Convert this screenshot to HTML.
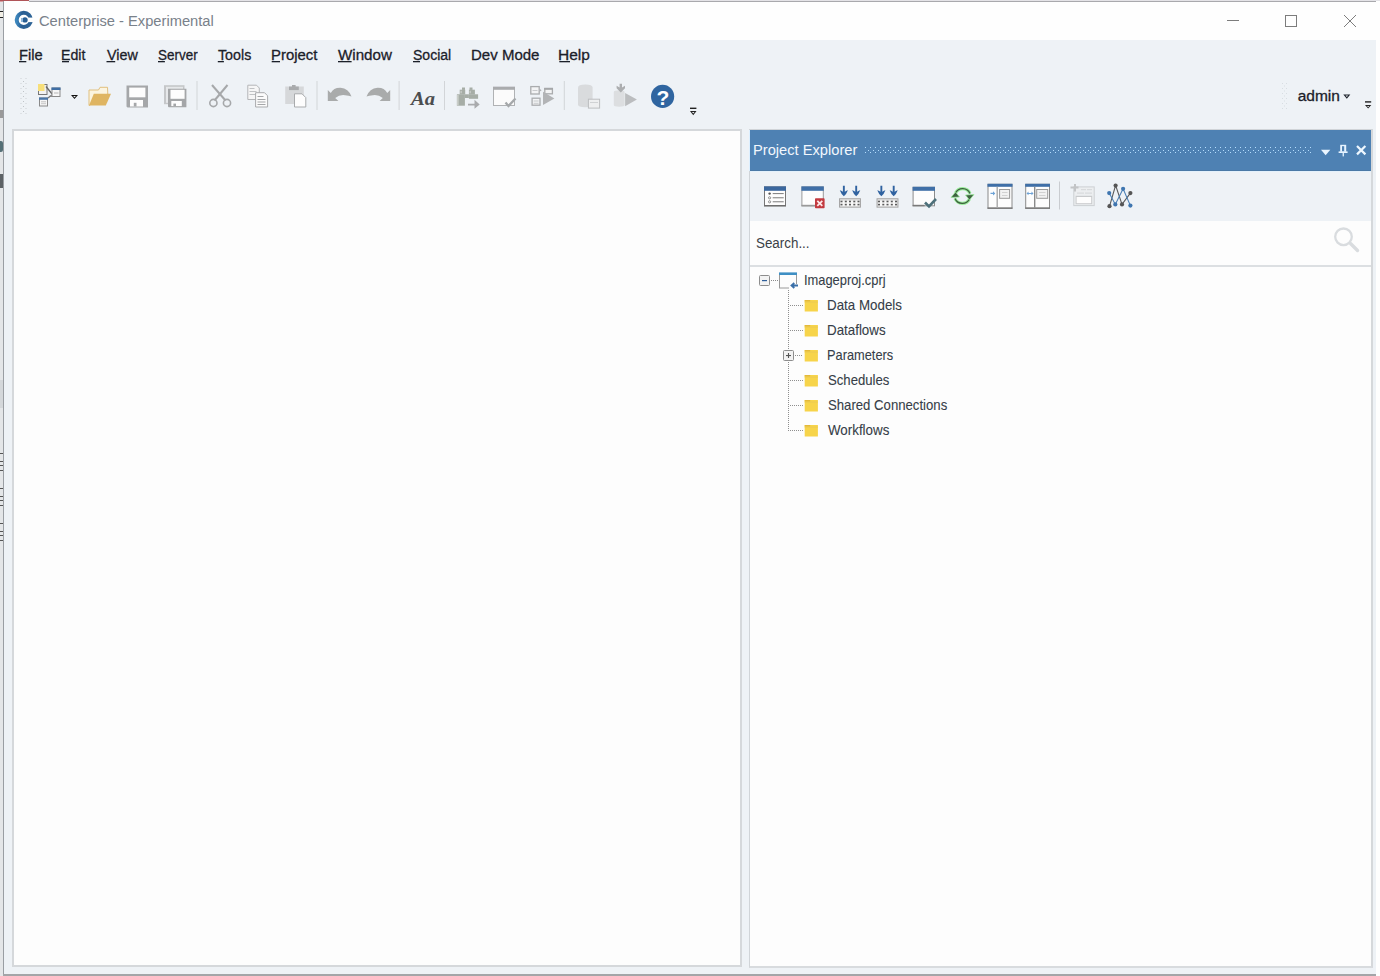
<!DOCTYPE html>
<html><head><meta charset="utf-8">
<style>
*{margin:0;padding:0;box-sizing:border-box}
html,body{width:1380px;height:976px;overflow:hidden;background:#fff;font-family:"Liberation Sans",sans-serif}
.a{position:absolute}
.t{position:absolute;white-space:nowrap;line-height:1;transform-origin:0 0}
.menu{color:#1b2029;-webkit-text-stroke:0.3px #1b2029}
.tree{color:#363d48;-webkit-text-stroke:0.1px #363d48}
svg{position:absolute;left:0;top:0}
</style></head><body>
<div class="a" style="left:0;top:0;width:3px;height:976px;background:#e4e6e8"></div>
<div class="a" style="left:0;top:0;width:29px;height:1px;background:#b05458"></div><div class="a" style="left:0;top:1px;width:29px;height:1px;background:#d9a0a2"></div>
<div class="a" style="left:0;top:11px;width:3px;height:7px;border-top:1px solid #222;border-bottom:1px solid #222;background:#f2efe6"></div>
<div class="a" style="left:0;top:110px;width:3px;height:8px;background:#9a9a9a"></div>
<div class="a" style="left:0;top:141px;width:3px;height:11px;background:#557077;border-radius:0 2px 2px 0"></div>
<div class="a" style="left:0;top:174px;width:3px;height:14px;background:#5d6266"></div>
<div class="a" style="left:0;top:380px;width:3px;height:28px;background:#d4d7da"></div>
<div class="a" style="left:0;top:453px;width:3px;height:1px;background:#555"></div>
<div class="a" style="left:0;top:461px;width:3px;height:1px;background:#555"></div>
<div class="a" style="left:0;top:465px;width:3px;height:1px;background:#555"></div>
<div class="a" style="left:0;top:470px;width:3px;height:1px;background:#555"></div>
<div class="a" style="left:0;top:488px;width:3px;height:1px;background:#555"></div>
<div class="a" style="left:0;top:496px;width:3px;height:1px;background:#555"></div>
<div class="a" style="left:0;top:500px;width:3px;height:1px;background:#555"></div>
<div class="a" style="left:0;top:505px;width:3px;height:1px;background:#555"></div>
<div class="a" style="left:0;top:523px;width:3px;height:1px;background:#555"></div>
<div class="a" style="left:0;top:531px;width:3px;height:1px;background:#555"></div>
<div class="a" style="left:0;top:535px;width:3px;height:1px;background:#555"></div>
<div class="a" style="left:0;top:540px;width:3px;height:1px;background:#555"></div>
<div class="a" style="left:29px;top:0;width:1351px;height:1px;background:#e4e3e7"></div>
<div class="a" style="left:3px;top:1px;width:1373px;height:975px;background:#eef2f6;border-left:1px solid #9a9ea3"></div>
<div class="a" style="left:4px;top:1px;width:1372px;height:39px;background:#fefefe"></div>
<div class="a" style="left:29px;top:1px;width:1347px;height:1px;background:#a9a9ad"></div>
<div class="a" style="left:3px;top:974px;width:1373px;height:2px;background:#a3a5a8"></div>
<div class="a" style="left:1376px;top:1px;width:4px;height:975px;background:#fefefe"></div>
<div class="a" style="left:12px;top:129px;width:730px;height:838px;background:#fdfdfd;border:2px solid #d5d8db"></div>
<div class="a" style="left:749px;top:129px;width:624px;height:839px;background:#fdfdfd;border:1px solid #d0d4d8;border-right:2px solid #d5d8db;border-bottom:2px solid #d8dbde"></div>
<div class="a" style="left:750px;top:130px;width:621px;height:41px;background:#4e81b3"></div>
<div class="a" style="left:750px;top:171px;width:621px;height:50px;background:#eef2f6"></div>
<div class="a" style="left:749px;top:130px;width:1px;height:41px;background:#dcefff"></div>
<div class="a" style="left:750px;top:170px;width:621px;height:1px;background:#4a79a6"></div>
<div class="a" style="left:750px;top:171px;width:621px;height:1px;background:#e4f1fb"></div>
<div class="a" style="left:750px;top:265px;width:621px;height:2px;background:#dcdfe2"></div>
<div class="t" style="left:39.40px;top:13px;font-size:15.5px;transform:scaleX(0.948);color:#79818a">Centerprise - Experimental</div>
<div class="t menu" style="left:18.65px;top:47px;font-size:15.5px;transform:scaleX(0.946)">File</div>
<div class="t menu" style="left:61.29px;top:47px;font-size:15.5px;transform:scaleX(0.913)">Edit</div>
<div class="t menu" style="left:106.50px;top:47px;font-size:15.5px;transform:scaleX(0.923)">View</div>
<div class="t menu" style="left:158.00px;top:47px;font-size:15.5px;transform:scaleX(0.868)">Server</div>
<div class="t menu" style="left:217.80px;top:47px;font-size:15.5px;transform:scaleX(0.919)">Tools</div>
<div class="t menu" style="left:270.74px;top:47px;font-size:15.5px;transform:scaleX(0.962)">Project</div>
<div class="t menu" style="left:338.00px;top:47px;font-size:15.5px;transform:scaleX(0.978)">Window</div>
<div class="t menu" style="left:413.00px;top:47px;font-size:15.5px;transform:scaleX(0.905)">Social</div>
<div class="t menu" style="left:471.13px;top:47px;font-size:15.5px;transform:scaleX(0.969)">Dev Mode</div>
<div class="t menu" style="left:558.30px;top:47px;font-size:15.5px;transform:scaleX(0.998)">Help</div>
<div class="t menu" style="left:1297.70px;top:88px;font-size:15.5px;transform:scaleX(1.0)">admin</div>
<div class="t" style="left:753.45px;top:142px;font-size:15.5px;transform:scaleX(0.946);color:#f2f7fd">Project Explorer</div>
<div class="t" style="left:755.70px;top:235px;font-size:15.5px;transform:scaleX(0.863);color:#3a3f46">Search...</div>
<div class="t tree" style="left:803.84px;top:272px;font-size:15px;transform:scaleX(0.858)">Imageproj.cprj</div>
<div class="t tree" style="left:827.21px;top:297px;font-size:15px;transform:scaleX(0.89)">Data Models</div>
<div class="t tree" style="left:827.21px;top:322px;font-size:15px;transform:scaleX(0.89)">Dataflows</div>
<div class="t tree" style="left:827.25px;top:347px;font-size:15px;transform:scaleX(0.854)">Parameters</div>
<div class="t tree" style="left:828.10px;top:372px;font-size:15px;transform:scaleX(0.876)">Schedules</div>
<div class="t tree" style="left:828.10px;top:397px;font-size:15px;transform:scaleX(0.877)">Shared Connections</div>
<div class="t tree" style="left:828.10px;top:422px;font-size:15px;transform:scaleX(0.89)">Workflows</div>

<svg width="1380" height="976" viewBox="0 0 1380 976">
<!-- logo -->
<defs><linearGradient id="lg" x1="0" y1="0" x2="1" y2="0"><stop offset="0" stop-color="#3c86bd"/><stop offset="0.35" stop-color="#2b5f93"/><stop offset="1" stop-color="#2d6396"/></linearGradient></defs>
<circle cx="23.8" cy="19.9" r="7.1" fill="none" stroke="url(#lg)" stroke-width="4"/>
<rect x="26" y="17.6" width="9" height="4.5" fill="#fefefe"/>
<circle cx="25" cy="19.9" r="2.7" fill="#2a5f93"/>
<path d="M21,18 L23,18 L23,22 L21,22 Z" fill="#8fb6d8"/>
<!-- window controls -->
<line x1="1227" y1="20.5" x2="1239" y2="20.5" stroke="#7c7c7c" stroke-width="1"/>
<rect x="1285.5" y="15.5" width="11" height="11" fill="none" stroke="#7c7c7c" stroke-width="1"/>
<path d="M1344,15 L1356,27 M1356,15 L1344,27" stroke="#6e6e6e" stroke-width="0.9"/>

<!-- underlines -->
<g fill="#1b2029"><rect x="19" y="61" width="7.3" height="1.3"/><rect x="62" y="61" width="7.0" height="1.3"/><rect x="106.5" y="61" width="8.7" height="1.3"/><rect x="158" y="61" width="6.9" height="1.3"/><rect x="217.8" y="61" width="6.1" height="1.3"/><rect x="271.7" y="61" width="8.3" height="1.3"/><rect x="338" y="61" width="13.6" height="1.3"/><rect x="413" y="61" width="7.0" height="1.3"/><rect x="559.3" y="61" width="10.7" height="1.3"/></g>
<!-- toolbar grip -->
<g fill="#cdd1d5"><rect x="20.5" y="78" width="1" height="1"/><rect x="25.5" y="78" width="1" height="1"/><rect x="20.5" y="83" width="1" height="1"/><rect x="25.5" y="83" width="1" height="1"/><rect x="20.5" y="88" width="1" height="1"/><rect x="25.5" y="88" width="1" height="1"/><rect x="20.5" y="93" width="1" height="1"/><rect x="25.5" y="93" width="1" height="1"/><rect x="20.5" y="98" width="1" height="1"/><rect x="25.5" y="98" width="1" height="1"/><rect x="20.5" y="103" width="1" height="1"/><rect x="25.5" y="103" width="1" height="1"/><rect x="20.5" y="108" width="1" height="1"/><rect x="25.5" y="108" width="1" height="1"/><rect x="20.5" y="113" width="1" height="1"/><rect x="25.5" y="113" width="1" height="1"/></g><g fill="#bfc3c7"><rect x="23" y="81" width="1" height="1"/><rect x="23" y="86" width="1" height="1"/><rect x="23" y="91" width="1" height="1"/><rect x="23" y="96" width="1" height="1"/><rect x="23" y="101" width="1" height="1"/><rect x="23" y="106" width="1" height="1"/><rect x="23" y="111" width="1" height="1"/></g>
<!-- new project icon -->
<g>
<rect x="38.5" y="84.5" width="8.5" height="10" fill="#f2f2f2" stroke="#777" stroke-width="1"/>
<rect x="38" y="84" width="6.5" height="7" fill="#f7df7a"/>
<path d="M46,86.5 L52.5,94.5" stroke="#666" stroke-width="1.3"/>
<path d="M48,98 L50.5,96 L52,96" stroke="#777" stroke-width="1.3" fill="none"/>
<rect x="52" y="88" width="8" height="8.5" fill="#f6f6f6" stroke="#8a8a8a" stroke-width="1"/>
<rect x="51.5" y="87.5" width="9" height="2.5" fill="#3f6ea4"/>
<rect x="54" y="92" width="4.5" height="2" fill="#d6d6d6"/>
<rect x="39.5" y="98" width="8" height="8" fill="#f6f6f6" stroke="#8a8a8a" stroke-width="1"/>
<rect x="39" y="97.5" width="9" height="2.3" fill="#4a76a8"/>
<rect x="41" y="101" width="5" height="1.4" fill="#d0d0d0"/>
<rect x="41" y="103" width="5" height="1.2" fill="#d0d0d0"/>
</g>
<!-- dropdown arrow -->
<path d="M71,95 L78,95 L74.5,99 Z" fill="#111"/>
<path d="M73.2,96 L75.8,96 L74.5,97.5 Z" fill="#f0f0f0"/>

<!-- folder -->
<g>
<path d="M89,105.5 L89,90 L98.5,90 L100,87.3 L107.5,87.3 L107.8,94 Z" fill="#fbf4e0" stroke="#e1c07f" stroke-width="1"/>
<path d="M89,105.5 L93.8,93.7 L111,93.7 L105.8,105.5 Z" fill="#dfb562"/>
</g>

<!-- save -->
<g>
<path d="M126.5,85.5 L148,85.5 L148,107.5 L127.5,107.5 L126.5,106.5 Z" fill="#a5a7a9"/>
<rect x="129.2" y="87.6" width="16.2" height="9.7" fill="#fdfdfd"/>
<rect x="130" y="100" width="13" height="6.5" fill="#fdfdfd"/>
<rect x="133.8" y="102.8" width="2.7" height="3.7" fill="#a5a7a9"/>
</g>
<!-- save all -->
<g>
<rect x="164" y="85.2" width="20.5" height="19" fill="#c5c7c9"/>
<rect x="166" y="86.8" width="17" height="16" fill="#e6e8ea"/>
<path d="M168,88.7 L186.4,88.7 L186.4,107.2 L168.8,107.2 L168,106.4 Z" fill="#a4a6a8"/>
<rect x="170.5" y="89.8" width="14.1" height="9" fill="#fdfdfd"/>
<rect x="171.3" y="101" width="10.5" height="5.1" fill="#fdfdfd"/>
<rect x="173.4" y="103.6" width="2.6" height="2.5" fill="#a4a6a8"/>
</g>

<!-- separators -->
<g fill="#d2d5d8">
<rect x="196.5" y="81" width="1" height="29"/>
<rect x="316.5" y="81" width="1" height="29"/>
<rect x="398.6" y="81" width="1" height="29"/>
<rect x="444" y="81" width="1" height="29"/>
<rect x="563.8" y="81" width="1" height="29"/>
</g>

<!-- scissors -->
<g fill="none" stroke="#a6a8aa">
<path d="M212,85 L225.5,100.5" stroke-width="2"/>
<path d="M227.5,85 L214.5,100.5" stroke-width="2"/>
<circle cx="213.4" cy="103" r="3.6" stroke-width="1.6"/>
<circle cx="227" cy="103" r="3.6" stroke-width="1.6"/>
</g>

<!-- copy -->
<g>
<path d="M247.8,85.2 L256.5,85.2 L259.3,88 L259.3,99.5 L247.8,99.5 Z" fill="#f6f6f6" stroke="#b4b6b8" stroke-width="1"/>
<g fill="#c0c2c4"><rect x="249.5" y="88" width="5" height="1"/><rect x="249.5" y="91" width="7" height="1"/><rect x="249.5" y="94" width="7" height="1"/></g>
<path d="M255.6,92.7 L264.5,92.7 L267.6,95.8 L267.6,107 L255.6,107 Z" fill="#fbfbfb" stroke="#a9abad" stroke-width="1"/>
<g fill="#a5a7a9"><rect x="257.5" y="96" width="6" height="1"/><rect x="257.5" y="99" width="8" height="1"/><rect x="257.5" y="101.5" width="8" height="1"/><rect x="257.5" y="104" width="8" height="1"/></g>
</g>

<!-- paste -->
<g>
<rect x="285.2" y="86.5" width="18.6" height="17.5" fill="#d6d8da"/>
<rect x="289" y="86.5" width="9.8" height="3.6" fill="#a9abad"/>
<rect x="292" y="85" width="3.6" height="2" fill="#a9abad"/>
<path d="M294.5,93.8 L302,93.8 L305.8,97.6 L305.8,107 L294.5,107 Z" fill="#fdfdfd" stroke="#a9abad" stroke-width="1"/>
</g>

<!-- undo -->
<path d="M327.8,90 L327.8,101 L338.4,101 L335.2,98 Q339.5,94.5 345,95.2 Q349,95.8 351.5,96.5 Q348.5,88.5 340.5,87.8 Q333.5,87.6 330.8,93 Z" fill="#a9abab"/>
<!-- redo -->
<path d="M390.2,90 L390.2,101 L379.6,101 L382.8,98 Q378.5,94.5 373,95.2 Q369,95.8 366.5,96.5 Q369.5,88.5 377.5,87.8 Q384.5,87.6 387.2,93 Z" fill="#a9abab"/>

<!-- Aa -->
<text x="411" y="105" font-family="Liberation Serif" font-weight="bold" font-style="italic" font-size="19" fill="#4b4d4f" textLength="24" lengthAdjust="spacingAndGlyphs">Aa</text>

<!-- binoculars -->
<g fill="#a6ada6">
<rect x="462" y="87.5" width="3" height="2.4"/>
<rect x="469.5" y="87.5" width="3" height="2.4"/>
<rect x="459.7" y="89.7" width="5.5" height="4.8"/>
<rect x="468.9" y="89.7" width="6" height="4.8"/>
<rect x="456.9" y="94.3" width="8" height="11.4"/>
<rect x="464.9" y="94.3" width="4" height="3.7"/>
<rect x="468.9" y="94.3" width="9.2" height="4.5"/>
<path d="M468,103.8 L474.5,103.8 L474.5,99.8 L479.7,104.6 L474.5,108.7 L474.5,105.4 L468,105.4 Z" fill="#a9abad"/>
</g>
<g fill="#c9cdc9"><rect x="456.9" y="95" width="1.8" height="10.5"/><rect x="460.5" y="90.8" width="1.3" height="2.5"/><rect x="469.5" y="90.8" width="1.3" height="2.5"/></g>
<!-- window check -->
<g>
<rect x="493.5" y="87.3" width="21" height="18.2" fill="#fbfbfb" stroke="#b0b2b4" stroke-width="1"/>
<rect x="493" y="86.8" width="22" height="3" fill="#a9abad"/>
<path d="M505.5,102.5 L508.5,106 L515.5,98.5" fill="none" stroke="#a5a8aa" stroke-width="2.3"/>
</g>
<!-- run -->
<g fill="#f3f4f5" stroke="#aaacae" stroke-width="1.3">
<rect x="530.8" y="86.6" width="8.4" height="7.4"/>
<rect x="532.1" y="98.2" width="7.9" height="7"/>
<rect x="544.8" y="88.5" width="7.6" height="5.3"/>
</g>
<g fill="#c8cacc"><rect x="532.5" y="90" width="5" height="1"/><rect x="533.6" y="100.5" width="5" height="1"/><rect x="533.6" y="102.8" width="5" height="1"/></g>
<rect x="544.2" y="87.9" width="8.8" height="1.9" fill="#a5a7a9"/>
<path d="M539.8,89 L541.6,90.2 L539.8,91.4 Z" fill="#aaacae"/>
<path d="M543,91.8 L554.4,98.4 L543,105 Z" fill="#b2b4b6"/>
<!-- db -->
<g>
<path d="M578,87.5 Q578,84.6 585.3,84.6 Q592.6,84.6 592.6,87.5 L592.6,104.5 Q592.6,107.2 585.3,107.2 Q578,107.2 578,104.5 Z" fill="#d9dbdd"/>
<rect x="588.4" y="99.2" width="11.2" height="8.9" fill="#eeeff0" stroke="#bcbec0" stroke-width="1"/>
<rect x="590" y="102" width="8" height="1" fill="#d0d2d4"/>
</g>
<!-- deploy -->
<g>
<path d="M613.8,92 Q613.8,90.2 619.2,90.2 Q624.6,90.2 624.6,92 L624.6,105 Q624.6,106.7 619.2,106.7 Q613.8,106.7 613.8,105 Z" fill="#dcdee0"/>
<path d="M619.6,83.7 L622,83.7 L622,87.6 L625,85.8 L625,88.2 L620.8,92.4 L616.6,88.2 L616.6,85.8 L619.6,87.6 Z" fill="#acaeb0"/>
<path d="M625.1,93 L636.9,99.6 L625.1,106.3 Z" fill="#bbbdbf"/>
</g>
<!-- help -->
<circle cx="662.6" cy="96.4" r="11.6" fill="#2f65a0"/>
<text x="662.8" y="104.6" text-anchor="middle" font-family="Liberation Sans" font-weight="bold" font-size="21" fill="#fff">?</text>
<!-- overflow -->
<rect x="690" y="107.6" width="6.4" height="1.4" fill="#222"/>
<path d="M690,111 L696.5,111 L693.25,115.2 Z" fill="#222"/>
<path d="M692,112 L694.5,112 L693.25,113.6 Z" fill="#eef2f6"/>

<!-- right grip -->
<g fill="#d8dde2">
<rect x="1282" y="83" width="1" height="1"/><rect x="1286" y="83" width="1" height="1"/>
<rect x="1284" y="85.5" width="1" height="1"/>
<rect x="1282" y="88" width="1" height="1"/><rect x="1286" y="88" width="1" height="1"/>
<rect x="1284" y="90.5" width="1" height="1"/>
<rect x="1282" y="93" width="1" height="1"/><rect x="1286" y="93" width="1" height="1"/>
<rect x="1284" y="95.5" width="1" height="1"/>
<rect x="1282" y="98" width="1" height="1"/><rect x="1286" y="98" width="1" height="1"/>
<rect x="1284" y="100.5" width="1" height="1"/>
<rect x="1282" y="103" width="1" height="1"/><rect x="1286" y="103" width="1" height="1"/>
<rect x="1284" y="105.5" width="1" height="1"/>
<rect x="1282" y="108" width="1" height="1"/><rect x="1286" y="108" width="1" height="1"/>
</g>
<!-- admin arrow -->
<path d="M1343.3,94.6 L1350.3,94.6 L1346.8,98.8 Z" fill="#1b2029"/>
<path d="M1345.5,95.6 L1348.1,95.6 L1346.8,97.1 Z" fill="#eef2f6"/>
<!-- overflow right -->
<rect x="1365" y="101.2" width="6.2" height="1.4" fill="#222"/>
<path d="M1365,105 L1371.3,105 L1368.15,108.6 Z" fill="#222"/>
<path d="M1367,106 L1369.3,106 L1368.15,107.3 Z" fill="#eef2f6"/>

<!-- header grip dots -->
<pattern id="dots" x="865" y="147" width="5" height="7" patternUnits="userSpaceOnUse">
<rect x="0" y="0" width="1" height="1" fill="#b4dcfc"/>
<rect x="3" y="3" width="1" height="1" fill="#b4dcfc"/>
<rect x="0" y="5" width="1" height="1" fill="#b4dcfc"/>
</pattern>
<rect x="865" y="147" width="447" height="7" fill="url(#dots)"/>
<!-- header buttons -->
<path d="M1321,149.7 L1330.3,149.7 L1325.65,155.2 Z" fill="#eaf5ff"/>
<g fill="#e6f3ff">
<rect x="1340.2" y="144.8" width="6" height="7"/>
<rect x="1338.6" y="151.4" width="9" height="1.6"/>
<rect x="1342.6" y="153" width="1.3" height="3.4"/>
</g>
<rect x="1342" y="146.2" width="2.2" height="5" fill="#4e81b3"/>
<path d="M1357,146 L1365.4,154.4 M1365.4,146 L1357,154.4" stroke="#eef7ff" stroke-width="2.2"/>

<!-- panel toolbar -->
<!-- icon1 list -->
<g>
<rect x="764.5" y="186.9" width="21" height="19" fill="#fdfdfd" stroke="#767676" stroke-width="1"/>
<rect x="764" y="186.4" width="22" height="4.4" fill="#3a679e"/>
<rect x="764" y="205" width="22" height="1.3" fill="#6e6e6e"/>
<circle cx="769.6" cy="193.6" r="1.2" fill="#555"/>
<circle cx="769.6" cy="197.8" r="1.1" fill="none" stroke="#777" stroke-width="0.8"/>
<circle cx="769.6" cy="201.8" r="1.1" fill="none" stroke="#777" stroke-width="0.8"/>
<g fill="#888"><rect x="772.7" y="193" width="11" height="1.1"/><rect x="772.7" y="197.2" width="11" height="1.1"/><rect x="772.7" y="201.2" width="11" height="1.1"/></g>
</g>
<!-- icon2 window x -->
<g>
<rect x="801.9" y="186.9" width="21.4" height="19" fill="#fdfdfd" stroke="#9a9a9a" stroke-width="1"/>
<rect x="801.4" y="186.4" width="22.4" height="4.4" fill="#3f6fa7"/>
<rect x="801.4" y="204.8" width="14" height="1.5" fill="#9a9a9a"/>
<rect x="815" y="198.3" width="9.6" height="10" rx="0.8" fill="#c23a40"/>
<path d="M817.3,200.8 L822.3,205.8 M822.3,200.8 L817.3,205.8" stroke="#fde8e8" stroke-width="1.8"/>
</g>
<!-- icon3 arrows grid -->
<g id="ag">
<rect x="839.6" y="198.8" width="20.8" height="8.3" fill="#f7f7f7" stroke="#a3a3a3" stroke-width="1.1"/>
<g fill="#d2d2d2"><rect x="840.2" y="199.4" width="19.6" height="1"/><rect x="840.2" y="206" width="19.6" height="0.6"/></g>
<g fill="#5a5a5a"><rect x="840.50" y="200.7" width="2" height="1.6"/><rect x="840.50" y="203.8" width="2" height="1.6"/><rect x="844.80" y="200.7" width="2" height="1.6"/><rect x="844.80" y="203.8" width="2" height="1.6"/><rect x="849.00" y="200.7" width="2" height="1.6"/><rect x="849.00" y="203.8" width="2" height="1.6"/><rect x="853.30" y="200.7" width="2" height="1.6"/><rect x="853.30" y="203.8" width="2" height="1.6"/><rect x="857.50" y="200.7" width="2" height="1.6"/><rect x="857.50" y="203.8" width="2" height="1.6"/></g>
<path d="M842.9,185.7 L844.8,185.7 L844.8,191.8 Q846.5,190.6 847.9,190.2 Q846.5,194 843.85,196.3 Q841.2,194 839.8,190.2 Q841.2,190.6 842.9,191.8 Z" fill="#2f62a0"/>
<path d="M855.25,185.7 L857.15,185.7 L857.15,191.8 Q858.85,190.6 860.25,190.2 Q858.85,194 856.2,196.3 Q853.55,194 852.15,190.2 Q853.55,190.6 855.25,191.8 Z" fill="#2f62a0"/>
</g>
<use href="#ag" x="37.5" y="0"/>
<!-- icon5 window check -->
<g>
<rect x="913.1" y="187.3" width="21.4" height="18.5" fill="#fdfdfd" stroke="#8c8c8c" stroke-width="1"/>
<rect x="912.6" y="186.8" width="22.4" height="4" fill="#3f6fa7"/>
<rect x="912.6" y="204.8" width="12" height="1.5" fill="#7a7a7a"/>
<path d="M925,202.5 L929,206.5 L936,199" fill="none" stroke="#4d707a" stroke-width="2.6"/>
</g>
<!-- refresh -->
<g>
<path d="M955.5,193 A8,8 0 0 1 970,193.5" fill="none" stroke="#9aee9a" stroke-width="3.2"/>
<path d="M969.5,199 A8,8 0 0 1 955,198.5" fill="none" stroke="#9aee9a" stroke-width="3.2"/>
<path d="M955.5,193 A8,8 0 0 1 970,193.5" fill="none" stroke="#3f6140" stroke-width="1.4"/>
<path d="M969.5,199 A8,8 0 0 1 955,198.5" fill="none" stroke="#3f6140" stroke-width="1.4"/>
<path d="M951,197.5 L955.5,192 L959.5,197 Z" fill="#3f6140" stroke="#9aee9a" stroke-width="0.7"/>
<path d="M974,194.5 L969.5,200 L965.5,195 Z" fill="#3f6140" stroke="#9aee9a" stroke-width="0.7"/>
</g>
<!-- panel1 -->
<g>
<rect x="988" y="184.3" width="24" height="24" fill="#fdfdfd" stroke="#8a8a8a" stroke-width="1"/>
<rect x="987.5" y="183.8" width="25" height="3" fill="#3f6fa7"/>
<rect x="987.5" y="207.4" width="25" height="1.4" fill="#777"/>
<rect x="996.5" y="186.8" width="1.4" height="21" fill="#a9a9a9"/>
<rect x="999.6" y="189.5" width="10" height="8.8" fill="#f2f2f2" stroke="#9a9a9a" stroke-width="1"/>
<rect x="1002" y="192" width="5.5" height="0.9" fill="#cfcfcf"/>
<rect x="1002" y="195" width="5.5" height="0.9" fill="#cfcfcf"/>
<path d="M990.5,192.8 L993,192.8 L993,191.3 L995.3,193.4 L993,195.5 L993,194 L990.5,194 Z" fill="#6da2d6"/>
</g>
<!-- panel2 -->
<g>
<rect x="1025.7" y="184.3" width="23.8" height="24" fill="#fdfdfd" stroke="#8a8a8a" stroke-width="1"/>
<rect x="1025.2" y="183.8" width="24.8" height="3" fill="#3f6fa7"/>
<rect x="1025.2" y="207.4" width="24.8" height="1.4" fill="#777"/>
<rect x="1034" y="186.8" width="1.4" height="21" fill="#8a8a8a"/>
<rect x="1036.7" y="189.5" width="11" height="8.8" fill="#f2f2f2" stroke="#9a9a9a" stroke-width="1"/>
<rect x="1039" y="192" width="6.5" height="0.9" fill="#cfcfcf"/>
<rect x="1039" y="195" width="6.5" height="0.9" fill="#cfcfcf"/>
<path d="M1026.5,193.4 L1028.5,191.5 L1028.5,195.3 Z M1033.5,193.4 L1031.5,191.5 L1031.5,195.3 Z M1028.5,192.9 L1031.5,192.9 L1031.5,193.9 L1028.5,193.9 Z" fill="#6da2d6"/>
</g>
<rect x="1059" y="181.5" width="1" height="28" fill="#c9ccd0"/>
<!-- grid window -->
<g>
<rect x="1073.8" y="186.9" width="20.4" height="18.7" fill="#eceef0" stroke="#cdd0d3" stroke-width="1"/>
<g fill="#d8dadc"><rect x="1081" y="189" width="5" height="1.2"/><rect x="1087" y="189" width="5" height="1.2"/><rect x="1077" y="192.5" width="7" height="1.2"/><rect x="1085" y="192.5" width="7" height="1.2"/></g>
<rect x="1075.6" y="195.8" width="16.6" height="8.4" fill="#c8cacc"/>
<rect x="1076.6" y="197" width="14.6" height="6.2" fill="#fdfdfd"/>
<path d="M1074,184 L1076,184 L1076,186.5 L1078.5,186.5 L1078.5,188.5 L1076,188.5 L1076,191.5 L1074,191.5 L1074,188.5 L1070.5,188.5 L1070.5,186.5 L1074,186.5 Z" fill="#c2c4c6"/>
</g>
<!-- network -->
<g fill="none" stroke-width="1.1">
<path d="M1109.5,206.4 L1115.6,185.3 L1122,204.4 L1130.4,193.1" stroke="#5a5a5a"/>
<path d="M1109.2,193.1 L1115.3,204.4 L1123.1,188.8 L1130.4,205.6" stroke="#4a7fb5"/>
</g>
<g fill="#555">
<circle cx="1115.6" cy="185.6" r="2.1"/><circle cx="1109.5" cy="206.2" r="2.1"/><circle cx="1122" cy="204.4" r="2.1"/><circle cx="1130.4" cy="193.1" r="2.1"/>
</g>
<g fill="#3f76b0">
<circle cx="1109.2" cy="193.1" r="2.1"/><circle cx="1115.3" cy="204.4" r="2.1"/><circle cx="1123.1" cy="188.8" r="2.1"/><circle cx="1130.4" cy="205.6" r="2.1"/>
</g>

<!-- search magnifier -->
<g fill="none" stroke="#d9dcdf">
<circle cx="1343.5" cy="236.8" r="8.3" stroke-width="2.3"/>
<path d="M1350.5,243.5 L1357.5,250.5" stroke-width="3.4" stroke-linecap="round"/>
</g>

<!-- tree -->
<g>
<rect x="759.5" y="275.5" width="10" height="10" rx="1" fill="#f3f3f3" stroke="#8d8d8d" stroke-width="1"/>
<rect x="762" y="280" width="5" height="1.2" fill="#2f5f9a"/>
<g fill="#8a8a8a">
<rect x="771" y="280" width="1" height="1"/><rect x="773" y="280" width="1" height="1"/><rect x="775" y="280" width="1" height="1"/><rect x="777" y="280" width="1" height="1"/>
</g>
<!-- project icon -->
<rect x="779.5" y="273.5" width="17" height="14.5" fill="#fdfdfd" stroke="#9a9a9a" stroke-width="1"/>
<rect x="779" y="272.4" width="18" height="2.6" fill="#3f8fc4"/>
<rect x="789" y="284" width="9" height="5" fill="#fdfdfd"/>
<path d="M798,285.5 L792,285.5 M794.3,283 L791.5,285.5 L794.3,288" fill="none" stroke="#3a6fa8" stroke-width="1.8"/>
<!-- vertical dotted line -->
<g fill="#8a8a8a" id="vd"></g>
</g>
<g fill="#8f8f8f"><rect x="788" y="290" width="1" height="1"/><rect x="788" y="292" width="1" height="1"/><rect x="788" y="294" width="1" height="1"/><rect x="788" y="296" width="1" height="1"/><rect x="788" y="298" width="1" height="1"/><rect x="788" y="300" width="1" height="1"/><rect x="788" y="302" width="1" height="1"/><rect x="788" y="304" width="1" height="1"/><rect x="788" y="306" width="1" height="1"/><rect x="788" y="308" width="1" height="1"/><rect x="788" y="310" width="1" height="1"/><rect x="788" y="312" width="1" height="1"/><rect x="788" y="314" width="1" height="1"/><rect x="788" y="316" width="1" height="1"/><rect x="788" y="318" width="1" height="1"/><rect x="788" y="320" width="1" height="1"/><rect x="788" y="322" width="1" height="1"/><rect x="788" y="324" width="1" height="1"/><rect x="788" y="326" width="1" height="1"/><rect x="788" y="328" width="1" height="1"/><rect x="788" y="330" width="1" height="1"/><rect x="788" y="332" width="1" height="1"/><rect x="788" y="334" width="1" height="1"/><rect x="788" y="336" width="1" height="1"/><rect x="788" y="338" width="1" height="1"/><rect x="788" y="340" width="1" height="1"/><rect x="788" y="342" width="1" height="1"/><rect x="788" y="344" width="1" height="1"/><rect x="788" y="346" width="1" height="1"/><rect x="788" y="348" width="1" height="1"/><rect x="788" y="350" width="1" height="1"/><rect x="788" y="352" width="1" height="1"/><rect x="788" y="354" width="1" height="1"/><rect x="788" y="356" width="1" height="1"/><rect x="788" y="358" width="1" height="1"/><rect x="788" y="360" width="1" height="1"/><rect x="788" y="362" width="1" height="1"/><rect x="788" y="364" width="1" height="1"/><rect x="788" y="366" width="1" height="1"/><rect x="788" y="368" width="1" height="1"/><rect x="788" y="370" width="1" height="1"/><rect x="788" y="372" width="1" height="1"/><rect x="788" y="374" width="1" height="1"/><rect x="788" y="376" width="1" height="1"/><rect x="788" y="378" width="1" height="1"/><rect x="788" y="380" width="1" height="1"/><rect x="788" y="382" width="1" height="1"/><rect x="788" y="384" width="1" height="1"/><rect x="788" y="386" width="1" height="1"/><rect x="788" y="388" width="1" height="1"/><rect x="788" y="390" width="1" height="1"/><rect x="788" y="392" width="1" height="1"/><rect x="788" y="394" width="1" height="1"/><rect x="788" y="396" width="1" height="1"/><rect x="788" y="398" width="1" height="1"/><rect x="788" y="400" width="1" height="1"/><rect x="788" y="402" width="1" height="1"/><rect x="788" y="404" width="1" height="1"/><rect x="788" y="406" width="1" height="1"/><rect x="788" y="408" width="1" height="1"/><rect x="788" y="410" width="1" height="1"/><rect x="788" y="412" width="1" height="1"/><rect x="788" y="414" width="1" height="1"/><rect x="788" y="416" width="1" height="1"/><rect x="788" y="418" width="1" height="1"/><rect x="788" y="420" width="1" height="1"/><rect x="788" y="422" width="1" height="1"/><rect x="788" y="424" width="1" height="1"/><rect x="788" y="426" width="1" height="1"/><rect x="788" y="428" width="1" height="1"/><rect x="788" y="430" width="1" height="1"/><rect x="790" y="305" width="1" height="1"/><rect x="792" y="305" width="1" height="1"/><rect x="794" y="305" width="1" height="1"/><rect x="796" y="305" width="1" height="1"/><rect x="798" y="305" width="1" height="1"/><rect x="800" y="305" width="1" height="1"/><rect x="802" y="305" width="1" height="1"/><rect x="790" y="330" width="1" height="1"/><rect x="792" y="330" width="1" height="1"/><rect x="794" y="330" width="1" height="1"/><rect x="796" y="330" width="1" height="1"/><rect x="798" y="330" width="1" height="1"/><rect x="800" y="330" width="1" height="1"/><rect x="802" y="330" width="1" height="1"/><rect x="795" y="355" width="1" height="1"/><rect x="797" y="355" width="1" height="1"/><rect x="799" y="355" width="1" height="1"/><rect x="801" y="355" width="1" height="1"/><rect x="790" y="380" width="1" height="1"/><rect x="792" y="380" width="1" height="1"/><rect x="794" y="380" width="1" height="1"/><rect x="796" y="380" width="1" height="1"/><rect x="798" y="380" width="1" height="1"/><rect x="800" y="380" width="1" height="1"/><rect x="802" y="380" width="1" height="1"/><rect x="790" y="405" width="1" height="1"/><rect x="792" y="405" width="1" height="1"/><rect x="794" y="405" width="1" height="1"/><rect x="796" y="405" width="1" height="1"/><rect x="798" y="405" width="1" height="1"/><rect x="800" y="405" width="1" height="1"/><rect x="802" y="405" width="1" height="1"/><rect x="790" y="430" width="1" height="1"/><rect x="792" y="430" width="1" height="1"/><rect x="794" y="430" width="1" height="1"/><rect x="796" y="430" width="1" height="1"/><rect x="798" y="430" width="1" height="1"/><rect x="800" y="430" width="1" height="1"/><rect x="802" y="430" width="1" height="1"/></g><rect x="804.7" y="300.0" width="13.2" height="11.5" fill="#f7d44a"/><rect x="804.7" y="300.0" width="5.5" height="1.6" fill="#e4b93a"/><rect x="804.7" y="301.6" width="13.2" height="1" fill="#eccb53"/><rect x="804.7" y="325.0" width="13.2" height="11.5" fill="#f7d44a"/><rect x="804.7" y="325.0" width="5.5" height="1.6" fill="#e4b93a"/><rect x="804.7" y="326.6" width="13.2" height="1" fill="#eccb53"/><rect x="804.7" y="350.0" width="13.2" height="11.5" fill="#f7d44a"/><rect x="804.7" y="350.0" width="5.5" height="1.6" fill="#e4b93a"/><rect x="804.7" y="351.6" width="13.2" height="1" fill="#eccb53"/><rect x="804.7" y="375.0" width="13.2" height="11.5" fill="#f7d44a"/><rect x="804.7" y="375.0" width="5.5" height="1.6" fill="#e4b93a"/><rect x="804.7" y="376.6" width="13.2" height="1" fill="#eccb53"/><rect x="804.7" y="400.0" width="13.2" height="11.5" fill="#f7d44a"/><rect x="804.7" y="400.0" width="5.5" height="1.6" fill="#e4b93a"/><rect x="804.7" y="401.6" width="13.2" height="1" fill="#eccb53"/><rect x="804.7" y="425.0" width="13.2" height="11.5" fill="#f7d44a"/><rect x="804.7" y="425.0" width="5.5" height="1.6" fill="#e4b93a"/><rect x="804.7" y="426.6" width="13.2" height="1" fill="#eccb53"/><rect x="783.5" y="350.5" width="10" height="10" rx="1" fill="#f3f3f3" stroke="#8d8d8d" stroke-width="1"/><rect x="786" y="355" width="5" height="1.1" fill="#555"/><rect x="787.95" y="353" width="1.1" height="5" fill="#555"/></svg>

</body></html>
